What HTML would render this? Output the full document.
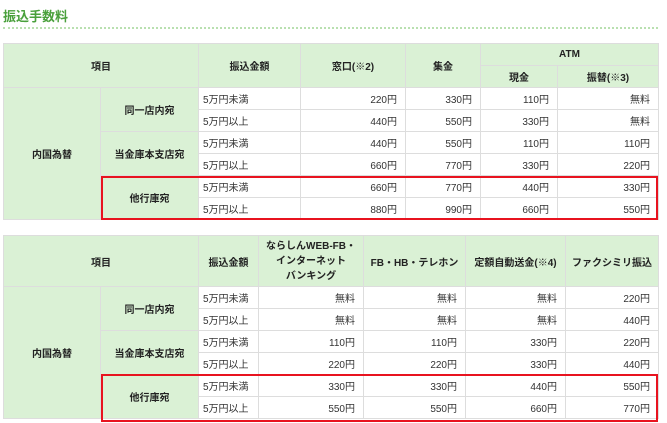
<!DOCTYPE html>
<html><head><meta charset="utf-8"><style>
body{margin:0;background:#fff;font-family:"Liberation Sans","Noto Sans CJK JP",sans-serif;font-size:10px;color:#333;position:relative;width:667px;height:423px;overflow:hidden}
h2{position:absolute;left:3px;top:6px;margin:0;font-size:13px;color:#4aa03c;font-weight:bold}
.line{position:absolute;left:3px;top:27px;width:655px;border-top:2px dotted #b9e0b0}
table{position:absolute;left:3px;width:655px;border-collapse:collapse;table-layout:fixed}
td,th{border:1px solid #ddd;padding:0 4px;height:21px}
th{background:#daf1d5;font-weight:bold;text-align:center;color:#222}
td{text-align:right;padding-right:8px}
td.l{text-align:left;padding-left:4px}
.red{position:absolute;border:2px solid #e8131f;box-sizing:border-box}
</style></head><body>
<h2>振込手数料</h2><div class="line"></div>
<table style="top:43px">
<colgroup><col style="width:97px"><col style="width:98px"><col style="width:102px"><col style="width:105px"><col style="width:75px"><col style="width:77px"><col style="width:101px"></colgroup>
<tr><th colspan="2" rowspan="2">項目</th><th rowspan="2">振込金額</th><th rowspan="2">窓口(※2)</th><th rowspan="2">集金</th><th colspan="2">ATM</th></tr>
<tr><th>現金</th><th>振替(※3)</th></tr>
<tr><th rowspan="6">内国為替</th><th rowspan="2">同一店内宛</th><td class="l">5万円未満</td><td>220円</td><td>330円</td><td>110円</td><td>無料</td></tr>
<tr><td class="l">5万円以上</td><td>440円</td><td>550円</td><td>330円</td><td>無料</td></tr>
<tr><th rowspan="2">当金庫本支店宛</th><td class="l">5万円未満</td><td>440円</td><td>550円</td><td>110円</td><td>110円</td></tr>
<tr><td class="l">5万円以上</td><td>660円</td><td>770円</td><td>330円</td><td>220円</td></tr>
<tr><th rowspan="2">他行庫宛</th><td class="l">5万円未満</td><td>660円</td><td>770円</td><td>440円</td><td>330円</td></tr>
<tr><td class="l">5万円以上</td><td>880円</td><td>990円</td><td>660円</td><td>550円</td></tr>
</table>
<div class="red" style="left:101px;top:176px;width:557px;height:44px"></div>
<table style="top:235px">
<colgroup><col style="width:97px"><col style="width:98px"><col style="width:60px"><col style="width:105px"><col style="width:102px"><col style="width:100px"><col style="width:93px"></colgroup>
<tr><th colspan="2" style="height:50px">項目</th><th>振込金額</th><th style="line-height:15px">ならしんWEB-FB・<br>インターネット<br>バンキング</th><th>FB・HB・テレホン</th><th>定額自動送金(※4)</th><th>ファクシミリ振込</th></tr>
<tr><th rowspan="6">内国為替</th><th rowspan="2">同一店内宛</th><td class="l">5万円未満</td><td>無料</td><td>無料</td><td>無料</td><td>220円</td></tr>
<tr><td class="l">5万円以上</td><td>無料</td><td>無料</td><td>無料</td><td>440円</td></tr>
<tr><th rowspan="2">当金庫本支店宛</th><td class="l">5万円未満</td><td>110円</td><td>110円</td><td>330円</td><td>220円</td></tr>
<tr><td class="l">5万円以上</td><td>220円</td><td>220円</td><td>330円</td><td>440円</td></tr>
<tr><th rowspan="2">他行庫宛</th><td class="l">5万円未満</td><td>330円</td><td>330円</td><td>440円</td><td>550円</td></tr>
<tr><td class="l">5万円以上</td><td>550円</td><td>550円</td><td>660円</td><td>770円</td></tr>
</table>
<div class="red" style="left:101px;top:374px;width:557px;height:48px"></div>
</body></html>
